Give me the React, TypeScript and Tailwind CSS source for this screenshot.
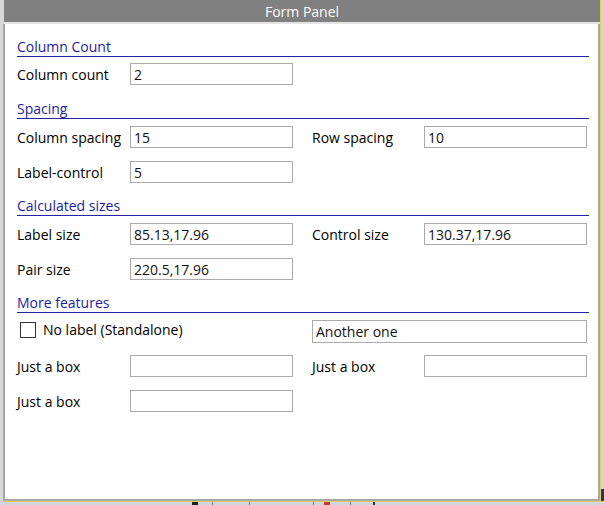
import React from "react";

const font = { fontFamily: '"Open Sans", "Noto Sans", sans-serif' };

function Header({ text }: { text: string }) {
  return (
    <div className="h-[25px] flex items-end border-b border-[#2323a3]">
      <span className="text-[14px] leading-[18px] text-[#1d1d9f]">{text}</span>
    </div>
  );
}

function Input({ value = "", w = "w-[163px]" }: { value?: string; w?: string }) {
  return (
    <div className={`${w} h-[22px] border border-[#ababab] bg-white flex items-center pl-[3px] text-[14px] text-[#111]`}>
      {value}
    </div>
  );
}

function Label({ text, w }: { text: string; w: string }) {
  return <div className={`${w} h-[22px] flex items-center pt-[1px] text-[14px] text-black`}>{text}</div>;
}

function Pair({ label, value, right }: { label: string; value?: string; right?: boolean }) {
  return (
    <div className="flex">
      <Label text={label} w={right ? "w-[112px]" : "w-[113px]"} />
      <Input value={value} />
    </div>
  );
}

function Row({ children }: { children: React.ReactNode }) {
  return <div className="flex gap-[19px] h-[22px]">{children}</div>;
}

export default function App() {
  return (
    <div className="w-[604px] h-[505px] bg-[#d6d6d6] flex flex-col overflow-hidden" style={font}>
      <div className="flex h-[501px]">
        <div className="w-[3px] bg-[#d8d8d8]" />
        <div className="w-[597px] flex flex-col">
          <div className="h-[22px] bg-[#808080] flex items-center justify-center text-white text-[14px] ml-[1px]">
            Form Panel
          </div>
          <div className="h-[2px] bg-[#e4e4e4] ml-[1px]" />
          <div className="flex-1 flex border-l-2 border-r-2 border-b-2 border-[#a8a8a8] bg-white">
            <div className="flex-1 flex flex-col pl-[12px] pr-[9px] pt-[8px]">
              {/* Section 1 */}
              <Header text="Column Count" />
              <div className="flex flex-col gap-[13px] mt-[6px]">
                <Row>
                  <Pair label="Column count" value="2" />
                </Row>
              </div>
              {/* Section 2 */}
              <div className="mt-[9px]">
                <Header text="Spacing" />
              </div>
              <div className="flex flex-col gap-[13px] mt-[7px]">
                <Row>
                  <Pair label="Column spacing" value="15" />
                  <Pair label="Row spacing" value="10" right />
                </Row>
                <Row>
                  <Pair label="Label-control" value="5" />
                </Row>
              </div>
              {/* Section 3 */}
              <div className="mt-[8px]">
                <Header text="Calculated sizes" />
              </div>
              <div className="flex flex-col gap-[13px] mt-[7px]">
                <Row>
                  <Pair label="Label size" value="85.13,17.96" />
                  <Pair label="Control size" value="130.37,17.96" right />
                </Row>
                <Row>
                  <Pair label="Pair size" value="220.5,17.96" />
                </Row>
              </div>
              {/* Section 4 */}
              <div className="mt-[8px]">
                <Header text="More features" />
              </div>
              <div className="flex flex-col mt-[7px]">
                <div className="flex gap-[19px] h-[23px]">
                  <div className="w-[276px] flex items-start pt-[1px]">
                    <div className="ml-[3px] w-[16px] h-[16px] border border-[#333] bg-white mt-[1px]" />
                    <span className="ml-[7px] text-[14px] leading-[18px] text-black">No label (Standalone)</span>
                  </div>
                  <div className="w-[275px] h-[23px] border border-[#ababab] flex items-center pl-[3px] text-[14px] text-[#111]">
                    Another one
                  </div>
                </div>
                <div className="mt-[12px]">
                  <Row>
                    <Pair label="Just a box" />
                    <Pair label="Just a box" right />
                  </Row>
                </div>
                <div className="mt-[13px]">
                  <Row>
                    <Pair label="Just a box" />
                  </Row>
                </div>
              </div>
            </div>
          </div>
        </div>
        <div className="w-[1px] bg-[#e3cf52]" />
        <div className="w-[3px] flex flex-col">
          <div className="flex-1 bg-[#d4d4d4]" />
          <div className="h-[12px] bg-[#2b3350]" />
        </div>
      </div>
      <div className="h-[1px] bg-[#e3cf52] ml-[3px]" />
      <div className="flex-1 bg-[#d0d5e0] flex items-start relative">
        <div className="ml-[192px] w-[6px] h-[3px] bg-[#222]" />
        <div className="ml-[14px] w-[1px] h-[3px] bg-[#777]" />
        <div className="ml-[36px] w-[1px] h-[3px] bg-[#777]" />
        <div className="ml-[63px] w-[1px] h-[3px] bg-[#777]" />
        <div className="ml-[10px] w-[6px] h-[3px] bg-[#c0392b]" />
        <div className="ml-[20px] w-[1px] h-[3px] bg-[#777]" />
        <div className="ml-[22px] w-[2px] h-[3px] bg-[#333]" />
      </div>
    </div>
  );
}
